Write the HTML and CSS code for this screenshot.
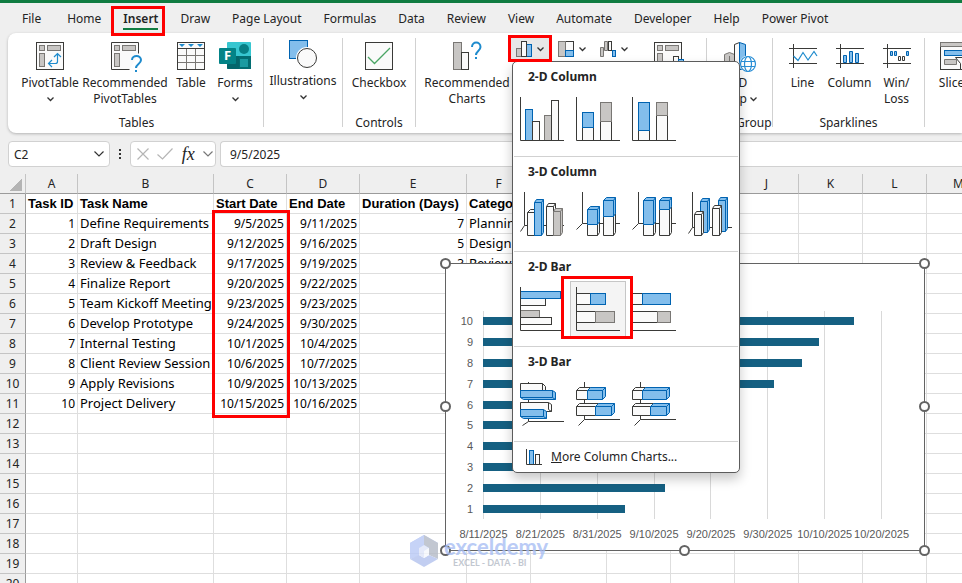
FILE: index.html
```html
<!DOCTYPE html>
<html lang="en">
<head>
<meta charset="utf-8">
<title>Project schedule</title>
<link rel="stylesheet" href="styles.css">
</head>
<body>
<div class="titlebar"></div>

<nav class="tabs" aria-label="Ribbon tabs">
  <button class="file">File</button>
  <button>Home</button>
  <button class="active marked">Insert</button>
  <button>Draw</button>
  <button>Page Layout</button>
  <button>Formulas</button>
  <button>Data</button>
  <button>Review</button>
  <button>View</button>
  <button>Automate</button>
  <button>Developer</button>
  <button>Help</button>
  <button>Power Pivot</button>
</nav>

<section class="ribbon" aria-label="Insert">
  <div class="group tables">
    <div class="tools">
      <button class="tool pivot">
        <svg class="icon" width="28" height="28"><rect class="w" x=".5" y=".5" width="27" height="27"/><rect class="g" x="3.5" y="3.5" width="5" height="5"/><rect class="g" x="11.5" y="3.5" width="13" height="5"/><rect class="g" x="3.5" y="11.5" width="5" height="13"/><path class="bl" d="M13 21.5h6.500q2 0 2-2V12M16 18l-3.500 3.500 3.500 3.500M18 15l3.500-3.500 3.500 3.500"/></svg>
        <span>PivotTable</span><svg class="chev" width="7" height="4"><path d="M.5.5l3 3 3-3"/></svg>
      </button>
      <button class="tool recommended">
        <svg class="icon" width="28" height="28"><path class="w" d="M18.500 27.500H.5V.5h27v11"/><rect class="g" x="3.500" y="3.500" width="5" height="5"/><rect class="g" x="11.500" y="3.500" width="13" height="5"/><rect class="g" x="3.500" y="11.500" width="5" height="13"/><path class="q" d="M21 18c0-5 9-5.500 9 0 0 4-5 4-5 8M25 28v2"/></svg>
        <span>Recommended<br>PivotTables</span>
      </button>
      <button class="tool narrow">
        <svg class="icon" width="28" height="28"><rect class="w" x=".5" y=".5" width="27" height="27"/><path class="gl" d="M9.500 7v20M18.500 7v20M1 13.500h26M1 20.500h26"/><path class="d" d="M0 6.500h28"/><path class="bf" d="M2 2h6L5 5zM11 2h6l-3 3zM20 2h6l-3 3z"/></svg>
        <span>Table</span>
      </button>
      <button class="tool narrow">
        <svg class="icon" width="32" height="28"><rect x="8" y="0" width="24" height="27" rx="1" fill="#37c6d0"/><path d="M8 14h24v12q0 1-1 1H9q-1 0-1-1z" fill="#03666b"/><rect x="20" y="14" width="12" height="13" fill="#026d72"/><circle cx="25" cy="7" r="5" fill="#077f85"/><rect x="21" y="17" width="8" height="8" fill="#1a9ba1"/><rect x="0" y="6" width="17" height="16" rx="1" fill="#038387"/><text x="5" y="18" class="tile">F</text></svg>
        <span>Forms</span><svg class="chev" width="7" height="4"><path d="M.5.5l3 3 3-3"/></svg>
      </button>
    </div>
    <div class="caption">Tables</div>
  </div>

  <div class="group illustrations">
    <div class="tools">
      <button class="tool">
        <svg class="icon" width="28" height="28"><rect class="b" x=".5" y=".5" width="18" height="18"/><circle cx="18" cy="18" r="11" fill="#fff"/><circle class="w" cx="18" cy="18" r="9.500"/></svg>
        <span>Illustrations</span><svg class="chev" width="7" height="4"><path d="M.5.5l3 3 3-3"/></svg>
      </button>
    </div>
  </div>

  <div class="group controls">
    <div class="tools">
      <button class="tool">
        <svg class="icon" width="28" height="28"><rect class="w" x=".5" y=".5" width="27" height="27"/><path d="M3 15l6.500 6.500L25 6" fill="none" stroke="#4aa564" stroke-width="1.300"/></svg>
        <span>Checkbox</span>
      </button>
    </div>
    <div class="caption">Controls</div>
  </div>

  <div class="group charts">
    <div class="tools">
      <button class="tool recommended">
        <svg class="icon" width="28" height="28"><rect class="g" x=".5" y=".5" width="8" height="27"/><rect class="w" x="8.500" y="10.500" width="7" height="17"/><path class="q" d="M19 5c0-6 8.500-6 8.500 0 0 4-4.500 4-4.500 8M23 15v2"/></svg>
        <span>Recommended<br>Charts</span>
      </button>
      <div class="dropdown">
        <button class="mini open marked" aria-label="Insert Column or Bar Chart">
          <svg width="16" height="16"><rect class="g" x=".5" y="7.500" width="5" height="8"/><rect class="b" x="10.500" y="3.500" width="5" height="12"/><rect class="w" x="5.500" y=".5" width="5" height="15"/></svg><svg class="chev" width="7" height="4"><path d="M.5.5l3 3 3-3"/></svg>
        </button>

        <div class="menu">
          <section>
            <h2>2-D Column</h2>
            <div class="choices">
              <button aria-label="Clustered Column"><svg width="44" height="44"><rect class="b" x="5.500" y="12.500" width="7" height="31"/><rect class="w" x="12.500" y="24.500" width="7" height="19"/><rect class="g" x="24.500" y="18.500" width="7" height="25"/><rect class="w" x="31.500" y="3.500" width="7" height="40"/><path class="d" d="M.5 0v43.500H44"/></svg></button>
              <button aria-label="Stacked Column"><svg width="44" height="44"><rect class="w" x="6.500" y="30.500" width="11" height="13"/><rect class="b" x="6.500" y="15.500" width="11" height="15"/><rect class="w" x="24.500" y="24.500" width="11" height="19"/><rect class="g" x="24.500" y="5.500" width="11" height="19"/><path class="d" d="M.5 0v43.500H44"/></svg></button>
              <button aria-label="100% Stacked Column"><svg width="44" height="44"><rect class="w" x="6.500" y="33.500" width="11" height="10"/><rect class="b" x="6.500" y="5.500" width="11" height="28"/><rect class="w" x="24.500" y="18.500" width="11" height="25"/><rect class="g" x="24.500" y="5.500" width="11" height="13"/><path class="d" d="M.5 0v43.500H44"/></svg></button>
            </div>
          </section>
          <section>
            <h2>3-D Column</h2>
            <div class="choices">
              <button aria-label="3-D Clustered Column"><svg width="44" height="44"><path class="d" d="M4.500 0v33.500H44M4.500 33.500l-4 6"/><path class="w" d="M7.500 20.500l3-3h7v26h-10zM17.500 20.500h-10"/><path class="w" d="M26.500 14.500l2-3h7v29l-2 3h-7zM35.500 11.500l-2 3h-7M33.500 14.500v29"/><path class="b" d="M14.500 10.500l2-3h7v33l-2 3h-7zM23.500 7.500l-2 3h-7M21.500 10.500v33"/><path class="g" d="M33.500 19.500l2-3h7v24l-2 3h-7zM42.500 16.500l-2 3h-7M40.500 19.500v24"/></svg></button>
              <button aria-label="3-D Stacked Column"><svg width="44" height="44"><path class="d" d="M6.500 0v31.500H44M6.500 31.500l-6 6"/><path class="w" d="M11.500 32.500l3-3h9v11l-2 3h-10zM21.500 32.500v11M27.500 24.500l3-3h9v19l-2 3h-10zM37.500 24.500v19"/><path class="b" d="M11.500 17.500l3-3h9v15l-2 3h-10zM23.500 14.500l-2 3h-10M21.500 17.500v15M27.500 8.500l3-3h9v16l-2 3h-10zM39.500 5.500l-2 3h-10M37.500 8.500v16"/></svg></button>
              <button aria-label="3-D 100% Stacked Column"><svg width="44" height="44"><path class="d" d="M6.500 0v31.500H44M6.500 31.500l-6 6"/><path class="w" d="M11.500 32.500l3-3h9v11l-2 3h-10zM21.500 32.500v11M27.500 17.500l3-3h9v26l-2 3h-10zM37.500 17.500v26"/><path class="b" d="M11.500 8.500l3-3h9v24l-2 3h-10zM23.500 5.500l-2 3h-10M21.500 8.500v24M27.500 8.500l3-3h9v9l-2 3h-10zM39.500 5.500l-2 3h-10M37.500 8.500v9"/></svg></button>
              <button aria-label="3-D Column"><svg width="44" height="44"><path class="d" d="M4.500 0v35.500H44M4.500 35.500l-4 6"/><path class="b" d="M12.500 9.500l2-3h7v31l-2 3h-7zM21.500 6.500l-2 3h-7M19.500 9.500v31M30.500 8.500l2-3h7v31l-2 3h-7zM39.500 5.500l-2 3h-7M37.500 8.500v31"/><path class="w" d="M6.500 22.500l2-3h7v21l-2 3h-7zM15.500 19.500l-2 3h-7M13.500 22.500v21M24.500 16.500l2-3h7v27l-2 3h-7zM33.500 13.500l-2 3h-7M31.500 16.500v27"/></svg></button>
            </div>
          </section>
          <section>
            <h2>2-D Bar</h2>
            <div class="choices">
              <button aria-label="Clustered Bar"><svg width="44" height="44"><rect class="w" x=".5" y="11.500" width="25" height="7"/><rect class="b" x=".5" y="4.500" width="40" height="7"/><rect class="g" x=".5" y="23.500" width="19" height="7"/><rect class="w" x=".5" y="30.500" width="31" height="7"/><path class="d" d="M.5 0v43.500H44"/></svg></button>
              <button class="selected marked" aria-label="Stacked Bar"><svg width="44" height="44"><rect class="w" x=".5" y="6.500" width="14" height="11"/><rect class="b" x="14.500" y="6.500" width="15" height="11"/><rect class="w" x=".5" y="24.500" width="19" height="11"/><rect class="g" x="19.500" y="24.500" width="19" height="11"/><path class="d" d="M.5 0v43.500H44"/></svg></button>
              <button aria-label="100% Stacked Bar"><svg width="44" height="44"><rect class="w" x=".5" y="6.500" width="10" height="11"/><rect class="b" x="10.500" y="6.500" width="28" height="11"/><rect class="w" x=".5" y="24.500" width="25" height="11"/><rect class="g" x="25.500" y="24.500" width="13" height="11"/><path class="d" d="M.5 0v43.500H44"/></svg></button>
            </div>
          </section>
          <section>
            <h2>3-D Bar</h2>
            <div class="choices">
              <button aria-label="3-D Clustered Bar"><svg width="44" height="44"><path class="d" d="M8.500 0v39.500H44M8.500 39.500l-6 4"/><path class="w" d="M.5 1.500h22l3 3v6H.5zM22.500 1.500v7"/><path class="b" d="M.5 8.500h32l3 2v7H3.500l-3-2zM32.500 8.500v7H.5M32.500 15.500l3 2"/><path class="w" d="M.5 20.500h28l3 2v7H.5zM28.500 20.500v7l3 2"/><path class="b" d="M.5 27.500h23l3 2v7h-23l-3-2zM23.500 27.500v7H.5M23.500 34.500l3 2"/></svg></button>
              <button aria-label="3-D Stacked Bar"><svg width="44" height="44"><path class="d" d="M8.500 0v37.500H44M8.500 37.500l-6 6"/><path class="w" d="M.5 8.500l3-3h11v3l-3 9H.5zM11.500 8.500H.5M.5 24.500l3-3h19v3l-3 9H.5zM19.500 24.500H.5"/><path class="b" d="M11.500 8.500l3-3h15v9l-3 3h-15zM29.500 5.500l-3 3h-15M26.500 8.500v9M19.500 24.500l3-3h16v9l-3 3h-16zM38.500 21.500l-3 3h-16M35.500 24.500v9"/></svg></button>
              <button aria-label="3-D 100% Stacked Bar"><svg width="44" height="44"><path class="d" d="M8.500 0v37.500H44M8.500 37.500l-6 6"/><path class="w" d="M.5 8.500l3-3h10v3l-3 9H.5zM10.500 8.500H.5M.5 24.500l3-3h18v3l-3 9H.5zM18.500 24.500H.5"/><path class="b" d="M10.500 8.500l3-3h24v9l-3 3h-24zM37.500 5.500l-3 3h-24M34.500 8.500v9M18.500 24.500l3-3h16v9l-3 3h-16zM37.500 21.500l-3 3h-16M34.500 24.500v9"/></svg></button>
            </div>
          </section>
          <button class="more"><svg width="16" height="16"><rect class="b" x="3.500" y="1.500" width="4" height="14"/><rect class="w" x="9.500" y="5.500" width="4" height="10"/><path class="d" d="M.5 0v15.500H16"/></svg><span><u>M</u>ore Column Charts...</span></button>
        </div>
      </div>
      <button class="mini" aria-label="Insert Hierarchy Chart"><svg width="16" height="16"><rect class="w" x=".5" y=".5" width="15" height="15"/><rect class="g" x=".5" y=".5" width="7" height="15"/><rect class="b" x="7.500" y="9.500" width="8" height="6"/></svg><svg class="chev" width="7" height="4"><path d="M.5.5l3 3 3-3"/></svg></button>
      <button class="mini" aria-label="Insert Waterfall Chart"><svg width="16" height="16"><path class="g" d="M.5 6.500h3v9h-3zM4.500.5h3v9h-3z"/><rect class="w" x="8.500" y=".5" width="3" height="9"/><rect class="b" x="12.500" y="9.500" width="3" height="6"/></svg><svg class="chev" width="7" height="4"><path d="M.5.5l3 3 3-3"/></svg></button>
      <button class="tool pivotchart" aria-label="PivotChart"><svg class="icon" width="28" height="28"><rect class="w" x=".5" y=".5" width="27" height="27"/><rect class="g" x="3.500" y="3.500" width="5" height="5"/><rect class="g" x="11.500" y="3.500" width="13" height="5"/><rect class="g" x="3.500" y="11.500" width="5" height="13"/><rect class="w" x="19.500" y="14.500" width="5" height="13"/><rect class="b" x="24.500" y="17.500" width="5" height="10"/></svg></button>
    </div>
  </div>

  <div class="group tours">
    <div class="tools">
      <button class="tool">
        <svg class="icon" width="32" height="28"><path class="g" d="M.5 12.500l5-2 5 2v15H.5zM5.500 14v13"/><path class="w" d="M10.500 2.500l5-2v27h-5z"/><path class="b" d="M15.500.5l6 2v25h-6z"/><circle cx="24" cy="22" r="8.500" fill="#fff"/><g fill="none" stroke="#2b8fd6" stroke-width="1.200"><circle cx="24" cy="22" r="7.500"/><ellipse cx="24" cy="22" rx="3.500" ry="7.500"/><path d="M17 19.500h14M17 24.500h14"/></g></svg>
        <span>3D<br>Map <svg class="chev" width="7" height="4"><path d="M.5.5l3 3 3-3"/></svg></span>
      </button>
    </div>
    <div class="caption">Tour Group</div>
  </div>

  <div class="group sparklines">
    <div class="tools">
      <button class="tool"><svg class="icon" width="28" height="28"><path class="d" d="M4.500 2v24M0 6.500h28M0 21.500h28"/><path class="bl" d="M4.500 14L9 18.500l5-8 5 7.500 6-8.500 3 4.500"/></svg><span>Line</span></button>
      <button class="tool"><svg class="icon" width="28" height="28"><path class="d" d="M4.500 2v24M0 6.500h28M0 21.500h28"/><path class="b" d="M7.500 13.500h3v7h-3zM13.500 9.500h3v11h-3zM19.500 11.500h3v9h-3z"/></svg><span>Column</span></button>
      <button class="tool"><svg class="icon" width="28" height="28"><path class="d" d="M4.500 2v24M0 6.500h28M0 21.500h28"/><path class="b" d="M7.500 9.500h2v4h-2zM11.500 9.500h2v4h-2zM23.500 9.500h2v4h-2z"/><path class="w" d="M15.500 14.500h2v4h-2zM19.500 14.500h2v4h-2z"/></svg><span>Win/<br>Loss</span></button>
    </div>
    <div class="caption">Sparklines</div>
  </div>

  <div class="group filters">
    <div class="tools">
      <button class="tool"><svg class="icon" width="28" height="28"><rect class="w" x=".5" y=".5" width="27" height="27"/><path class="g" d="M.5.5h27v4H.5zM4.500 17.500h12v5h-12z"/><rect class="b" x="4.500" y="8.500" width="20" height="5"/><path class="w" d="M15.500 15.500h13l-5 6v6h-3v-6z"/></svg><span>Slicer</span></button>
    </div>
  </div>
</section>

<div class="formula-bar">
  <label class="box name-box"><input value="C2" aria-label="Name box"><svg width="10" height="6"><path d="M.5.5l4.500 4.500L9.500.5"/></svg></label>
  <svg class="dots" width="4" height="12"><path d="M1 1h2v2H1zM1 5h2v2H1zM1 9h2v2H1z"/></svg>
  <div class="box fx-box">
    <button aria-label="Cancel"><svg class="faint" width="12" height="12"><path d="M.5.5l11 11M11.500.5l-11 11"/></svg></button>
    <button aria-label="Enter"><svg class="faint" width="16" height="12"><path d="M.5 6.500L5.500 11 15.500.5"/></svg></button>
    <button class="fx" aria-label="Insert function">fx</button>
    <svg class="mid" width="10" height="6"><path d="M.5.5l4.500 4.500L9.500.5"/></svg>
  </div>
  <input class="box formula" value="9/5/2025" aria-label="Formula">
</div>

<main class="sheet">
  <table>
    <colgroup><col class="c-head"><col class="c-id"><col class="c-name"><col class="c-date"><col class="c-date"><col class="c-days"><col class="c-std"><col class="c-g"><col class="c-std"><col class="c-std"><col class="c-std"><col class="c-std"><col class="c-std"><col class="c-std"></colgroup>
    <thead>
      <tr><th class="corner"></th><th>A</th><th>B</th><th>C</th><th>D</th><th>E</th><th>F</th><th>G</th><th>H</th><th>I</th><th>J</th><th>K</th><th>L</th><th>M</th></tr>
    </thead>
    <tbody>
      <tr class="titles"><th>1</th><td>Task ID<td>Task Name<td>Start Date<td>End Date<td>Duration (Days)<td>Category<td><td><td><td><td><td><td></tr>
      <tr><th>2</th><td>1<td>Define Requirements<td>9/5/2025<td>9/11/2025<td>7<td>Planning<td><td><td><td><td><td><td></tr>
      <tr><th>3</th><td>2<td>Draft Design<td>9/12/2025<td>9/16/2025<td>5<td>Design<td><td><td><td><td><td><td></tr>
      <tr><th>4</th><td>3<td>Review &amp; Feedback<td>9/17/2025<td>9/19/2025<td>3<td>Review<td><td><td><td><td><td><td></tr>
      <tr><th>5</th><td>4<td>Finalize Report<td>9/20/2025<td>9/22/2025<td><td><td><td><td><td><td><td><td></tr>
      <tr><th>6</th><td>5<td>Team Kickoff Meeting<td>9/23/2025<td>9/23/2025<td><td><td><td><td><td><td><td><td></tr>
      <tr><th>7</th><td>6<td>Develop Prototype<td>9/24/2025<td>9/30/2025<td><td><td><td><td><td><td><td><td></tr>
      <tr><th>8</th><td>7<td>Internal Testing<td>10/1/2025<td>10/4/2025<td><td><td><td><td><td><td><td><td></tr>
      <tr><th>9</th><td>8<td>Client Review Session<td>10/6/2025<td>10/7/2025<td><td><td><td><td><td><td><td><td></tr>
      <tr><th>10</th><td>9<td>Apply Revisions<td>10/9/2025<td>10/13/2025<td><td><td><td><td><td><td><td><td></tr>
      <tr><th>11</th><td>10<td>Project Delivery<td>10/15/2025<td>10/16/2025<td><td><td><td><td><td><td><td><td></tr>
      <tr><th>12</th><td><td><td><td><td><td><td><td><td><td><td><td><td></tr>
      <tr><th>13</th><td><td><td><td><td><td><td><td><td><td><td><td><td></tr>
      <tr><th>14</th><td><td><td><td><td><td><td><td><td><td><td><td><td></tr>
      <tr><th>15</th><td><td><td><td><td><td><td><td><td><td><td><td><td></tr>
      <tr><th>16</th><td><td><td><td><td><td><td><td><td><td><td><td><td></tr>
      <tr><th>17</th><td><td><td><td><td><td><td><td><td><td><td><td><td></tr>
      <tr><th>18</th><td><td><td><td><td><td><td><td><td><td><td><td><td></tr>
      <tr><th>19</th><td><td><td><td><td><td><td><td><td><td><td><td><td></tr>
      <tr><th>20</th><td><td><td><td><td><td><td><td><td><td><td><td><td></tr>
    </tbody>
  </table>

  <div class="range-mark"></div>

  <figure class="chart" aria-label="Start dates by task">
    <div class="names"><span>10</span><span>9</span><span>8</span><span>7</span><span>6</span><span>5</span><span>4</span><span>3</span><span>2</span><span>1</span></div>
    <div class="plot">
      <div class="lines"><i></i><i></i><i></i><i></i><i></i><i></i><i></i></div>
      <div class="bars">
        <div><b style="width:92.9%"></b></div>
        <div><b style="width:84.3%"></b></div>
        <div><b style="width:80%"></b></div>
        <div><b style="width:72.9%"></b></div>
        <div><b style="width:62.9%"></b></div>
        <div><b style="width:61.4%"></b></div>
        <div><b style="width:57.1%"></b></div>
        <div><b style="width:52.9%"></b></div>
        <div><b style="width:45.7%"></b></div>
        <div><b style="width:35.7%"></b></div>
      </div>
    </div>
    <div class="dates"><span>8/11/2025</span><span>8/21/2025</span><span>8/31/2025</span><span>9/10/2025</span><span>9/20/2025</span><span>9/30/2025</span><span>10/10/2025</span><span>10/20/2025</span></div>
    <span class="handle top left"></span><span class="handle top right"></span>
    <span class="handle middle left"></span><span class="handle middle right"></span>
    <span class="handle bottom left"></span><span class="handle bottom center"></span><span class="handle bottom right"></span>
  </figure>

  <div class="watermark">
    <svg width="30" height="32"><path d="M14 0l14 8-14 8L0 8z" fill="#a9bff5"/><path d="M0 8l14-8v10l-5 3v8L0 24z" fill="#b9c9f6"/><path d="M14 0l14 8v16l-9-4v-7l-5-3z" fill="#b4bac6"/><path d="M0 24l9-4 5 3 5-3 9 4-14 8z" fill="#b3c3ee"/><path d="M14 10l5 3v7l-5 3-5-3v-7z" fill="#dfe6fa"/><path d="M14 16l5-3v7l-5 3z" fill="#f6f8fd"/></svg>
    <div><strong>exceldemy</strong><small>EXCEL - DATA - BI</small></div>
  </div>
</main>
</body>
</html>
```
FILE: styles.css
```css
:root {
  --ui: "Noto Sans", "Open Sans", sans-serif;
  --cell: "Liberation Sans", sans-serif;
  --chrome: #efefef;
  --mark: #fe0000;
}

* { box-sizing: border-box; }

body {
  margin: 0;
  height: 100vh;
  display: flex;
  flex-direction: column;
  overflow: hidden;
  background: var(--chrome);
  color: #242424;
  font: 12px/16px var(--ui);
}

button {
  margin: 0;
  padding: 0;
  border: 0;
  background: none;
  color: inherit;
  font: inherit;
}

svg { display: block; flex: none; overflow: visible; }

/* Shared icon strokes and fills */
.w { fill: #fafafa; stroke: #3a3a38; }
.g { fill: #c8c6c4; stroke: #797774; }
.b { fill: #83beec; stroke: #0063b1; }
.d { fill: none; stroke: #3a3a38; }
.gl { fill: none; stroke: #797774; }
.bl { fill: none; stroke: #1e8bcd; stroke-width: 1.2; }
.bf { fill: #1e8bcd; }
.q { fill: none; stroke: #1e8bcd; stroke-width: 2; }
.tile { fill: #fff; font: bold 13px var(--ui); }
.chev { fill: none; stroke: #333; stroke-width: 1.3; }

/* Red call-outs */
.marked { position: relative; }
.marked::after {
  content: "";
  position: absolute;
  z-index: 5;
  inset: -3px;
  border: 3px solid var(--mark);
}

.titlebar { flex: none; height: 3px; background: #107c41; }

.tabs { flex: none; display: flex; gap: 22px; height: 30px; padding-left: 22px; }
.tabs button { padding-top: 2px; white-space: nowrap; }
.tabs .file { margin-right: 4px; }
.tabs .active { font-weight: 600; }
.tabs .active::before {
  content: "";
  position: absolute;
  inset: auto 0 3px;
  height: 2px;
  background: #107c41;
}
.tabs .marked::after { inset: 3px -7px -3px -12px; }

.ribbon {
  flex: none;
  display: flex;
  height: 100px;
  margin-left: 8px;
  padding: 5px 0 6px;
  border-radius: 8px 0 0 8px;
  background: #fff;
  box-shadow: 0 1px 3px rgba(0, 0, 0, .25);
}

.group {
  flex: none;
  display: flex;
  flex-direction: column;
  justify-content: space-between;
  border-right: 1px solid #d1d1d1;
  text-align: center;
}
.tools { display: flex; align-items: flex-start; justify-content: center; }
.tool { display: flex; flex-direction: column; align-items: center; padding-top: 4px; }
.icon { margin-bottom: 5px; }
.tool > .chev { margin-top: 6px; }
.tool span .chev { display: inline-block; vertical-align: 2px; }
.caption { margin-bottom: -4px; }

.tables { width: 256px; }
.tables .tools { justify-content: flex-start; padding-left: 11px; }
.tables .caption { padding-left: 2px; }
.pivot { width: 62px; }
.recommended { width: 88px; }
.narrow { width: 44px; }
.illustrations { width: 79px; }
.illustrations .tool { padding-top: 2px; }
.controls { width: 73px; }
.charts { width: 291px; }
.charts .tools { justify-content: flex-start; padding-left: 7px; }
.tours { width: 66px; }
.sparklines { width: 152px; }
.sparklines .tools { justify-content: flex-start; padding-left: 6px; }
.sparklines .tool { width: 47px; }
.filters { width: 58px; border: 0; }

.mini {
  display: flex;
  align-items: center;
  gap: 5px;
  width: 38px;
  height: 21px;
  margin-right: 4px;
  padding-left: 5px;
}
.mini.open { background: #e8e8e8; }
.pivotchart { width: 38px; margin-left: 12px; }

.dropdown { position: relative; }
.menu {
  position: absolute;
  z-index: 4;
  top: 23px;
  left: 1px;
  width: 228px;
  padding: 0 1px;
  border: 1px solid #5c5c5c;
  border-radius: 5px;
  background: #fff;
  box-shadow: 0 6px 12px rgba(0, 0, 0, .22);
  text-align: left;
}
.menu section { height: 95px; border-bottom: 1px solid #d1d1d1; }
.menu h2 { height: 29px; margin: 0; padding-left: 14px; font: bold 12px/29px var(--ui); }
.choices { display: flex; }
.choices button { width: 56px; height: 56px; padding: 6px; }
.choices .selected { border: 1px solid #c6c6c6; padding: 5px; background: #f4f4f4; }
.choices .marked::after { inset: -6px -8px -3px -10px; }
.more { display: flex; align-items: center; gap: 9px; width: 100%; height: 30px; padding-left: 12px; }

.formula-bar { flex: none; display: flex; height: 26px; margin: 8px 0 7px 8px; }
.box {
  display: flex;
  align-items: center;
  border: 1px solid #d1d1d1;
  border-radius: 4px;
  background: #fff;
}
.formula-bar input { border-width: 0; outline: 0; color: #242424; font: 12px var(--ui); }
.formula-bar svg { fill: none; stroke: #333; stroke-width: 1.2; }
.formula-bar .faint { stroke: #b5b5b5; }
.formula-bar .mid { stroke: #777; }
.name-box { width: 102px; padding: 0 5px; }
.name-box input { flex: 1; width: 40px; padding: 0; }
.formula-bar .dots { align-self: center; margin: 0 8px; fill: #333; stroke: none; }
.fx-box { width: 86px; padding: 0 2px 0 6px; justify-content: space-between; }
.fx { font: italic 18px/20px "Liberation Serif", serif; }
.formula-bar .formula { flex: 1; min-width: 0; margin-left: 4px; padding: 0 9px; border-width: 1px 0 1px 1px; border-radius: 4px 0 0 4px; }

.sheet { position: relative; flex: 1; min-height: 0; overflow: hidden; background: #fff; }

table { width: 991px; table-layout: fixed; border-collapse: separate; border-spacing: 0; color: #000; }
.c-head { width: 26px; }
.c-id { width: 52px; }
.c-name { width: 136px; }
.c-date { width: 73px; }
.c-days { width: 107px; }
.c-std { width: 64px; }
.c-g { width: 76px; }
th, td { height: 20px; padding: 0 2px; border: 0 solid #dedede; border-width: 0 1px 1px 0; white-space: nowrap; }
td { font: 12px/19px var(--ui); }
td:nth-child(3), td:nth-child(7) { font-size: 13px; }
td:nth-child(2), td:nth-child(4), td:nth-child(5), td:nth-child(6) { text-align: right; }
.titles td:nth-child(n) { font: bold 13px/19px var(--cell); text-align: left; }
th { background: var(--chrome); font: 12px/19px var(--ui); color: #242424; }
thead th { border-color: #c4c4c4; border-bottom-color: #9b9b9b; }
tbody th { border-color: #c4c4c4; border-right-color: #9b9b9b; }
.corner { background: linear-gradient(135deg, transparent 50%, #b4b4b4 50%) 10px 5px / 12px 12px no-repeat var(--chrome); }

.range-mark { position: absolute; left: 212px; top: 36px; width: 78px; height: 208px; border: 3px solid var(--mark); }

.chart {
  position: absolute;
  left: 445px;
  top: 89px;
  width: 480px;
  height: 288px;
  margin: 0;
  padding: 47px 42px 0 0;
  border: 1px solid #636363;
  background: #fff;
  display: grid;
  grid-template: 208px 16px / 27px 1fr;
  gap: 7px 10px;
  color: #595959;
  font: 11px/16px var(--cell);
}
.names { display: flex; flex-direction: column; text-align: right; }
.names span { flex: 1; display: flex; align-items: center; justify-content: flex-end; }
.plot { display: grid; }
.lines, .bars { grid-area: 1 / 1; display: flex; }
.lines { border-right: 1px solid #d9d9d9; }
.lines i { flex: 1; border-left: 1px solid #d9d9d9; }
.bars { flex-direction: column; }
.bars div { flex: 1; display: flex; align-items: center; }
.bars b { height: 8px; background: #156082; }
.dates { grid-column: 2; display: flex; margin: 0 -28px; text-align: center; }
.dates span { flex: 1; }

.handle { position: absolute; width: 11px; height: 11px; border: 2px solid #636363; border-radius: 50%; background: #fff; }
.handle.left { left: -6px; }
.handle.center { left: calc(50% - 6px); }
.handle.right { right: -6px; }
.handle.top { top: -6px; }
.handle.middle { top: calc(50% - 6px); }
.handle.bottom { bottom: -6px; }

.watermark { position: absolute; left: 410px; top: 361px; display: flex; gap: 4px; opacity: .8; color: #a9bff5; }
.watermark strong { display: block; font: bold 22px/23px Lato, sans-serif; }
.watermark small { display: block; padding-left: 9px; font: bold 9px/9px Lato, sans-serif; color: #b4bac6; }
```
